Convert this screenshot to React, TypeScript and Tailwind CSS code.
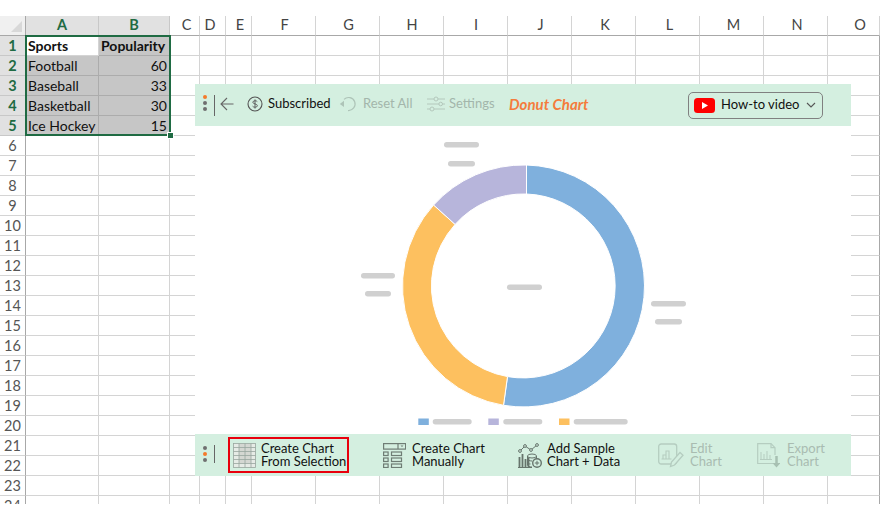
import React from "react";

const cols = [["A",""],["B",""],["C","pl-[4px]"],["D","pr-[5px]"],["E","pl-[3px]"],["F","pl-[2px]"],["G","pl-[2px]"],["H","pl-[1px]"],["I","pl-[1px]"],["J","pl-[2px]"],["K","pl-[3px]"],["L","pl-[4px]"],["M","pl-[4px]"],["N","pl-[3px]"],["O","pl-[13px]"]] as const;
const data: Record<number,[string,string]> = {1:["Sports","Popularity"],2:["Football","60"],3:["Baseball","33"],4:["Basketball","30"],5:["Ice Hockey","15"]};
const rows = Array.from({length:24},(_,i)=>i+1);

function Sheet(){
  return (
    <div className="grid h-[488px] overflow-hidden font-['Lato',sans-serif] text-[14px] text-[#111] grid-cols-[26px_73px_71px_30px_26px_26px_64px_64px_64px_64px_64px_64px_64px_64px_64px_52px] auto-rows-[20px]">
      <div className="bg-[#f0f0f0] border-b border-r border-[#a8a8a8] flex items-end justify-end"><div className="w-0 h-0 border-b-[11px] border-l-[11px] border-b-[#d8d8d8] border-l-transparent mr-[3px] mb-[3px]"/></div>
      {cols.map(([c,off],i)=>(
        <div key={c} className={`flex items-center justify-center pb-px border-b border-[#a8a8a8] text-[14.5px] ${off} ${i<2?"bg-[#e1e1e1] border-r border-r-[#c8c8c8] text-[#1f6b43] font-bold":"border-r border-r-[#d4d4d4] text-[#444]"}`}>{c}</div>
      ))}
      {rows.map(r=>(
        <React.Fragment key={r}>
          <div className={`flex items-center justify-center border-r border-[#a8a8a8] border-b text-[14.5px] ${r<=5?"bg-[#e1e1e1] border-b-[#c8c8c8] text-[#1f6b43] font-bold":"bg-white border-b-[#d4d4d4] text-[#555]"}`}>{r}</div>
          {cols.map(([c],i)=>{
            const sel = r<=5 && i<2 && !(r===1&&i===0);
            const v = i<2 && data[r] ? data[r][i] : "";
            return (
              <div key={c} className={`flex items-center border-b pl-[2px] pr-[2px] whitespace-nowrap ${i===14?"border-r border-r-[#a8a8a8]":"border-r"} ${sel?"bg-[#c6c6c6] border-[#acacac]":"border-[#d4d4d4]"} ${r===1?"font-bold":""} ${i===1&&r>1?"justify-end":""}`}>{v}</div>
            );
          })}
        </React.Fragment>
      ))}
    </div>
  );
}

const Dots=({mid}:{mid?:boolean})=>(
  <div className={`flex flex-col gap-[2px] w-[4px] ${mid?"mb-[3px]":"mb-[4px]"}`}>
    <span className={`w-[4px] h-[4px] rounded-full ${mid?"bg-[#6f6f6f]":"bg-[#f47a2a]"}`}/>
    <span className={`w-[4px] h-[4px] rounded-full ${mid?"bg-[#f47a2a]":"bg-[#6f6f6f]"}`}/>
    <span className="w-[4px] h-[4px] rounded-full bg-[#6f6f6f]"/>
  </div>
);

function TopBar(){
  return (
    <div className="flex items-center h-[42px] bg-[#d4efe0] pl-[8px] font-['Lato',sans-serif] text-[13px]">
      <Dots/>
      <span className="ml-[7px] w-px h-[21px] bg-[#666]"/>
      <svg className="ml-[5px] mb-[2px]" width="14" height="14" viewBox="0 0 14 14" fill="none" stroke="#666" strokeWidth="1.1"><path d="M13.500 7H1M7 1 1 7l6 6"/></svg>
      <svg className="ml-[13px] mb-[2px]" width="16" height="16" viewBox="0 0 16 16" fill="none" stroke="#555" strokeWidth="1.1"><circle cx="8" cy="8" r="7"/><path d="M10.300 5.600C9.800 4.600 6 4.200 5.800 6.200 5.700 8.300 10.500 7.500 10.400 9.800 10.200 11.800 6.200 11.400 5.600 10.200M8 3.400v9.200" strokeWidth=".9"/></svg>
      <span className="ml-[5px] mb-[2px] w-[62px] text-[#111] whitespace-nowrap">Subscribed</span>
      <svg className="ml-[9px] mb-[2px]" width="18" height="16" viewBox="0 0 18 16" fill="none" stroke="#aec4b8" strokeWidth="1.2"><path d="M5 3.400A6.500 6.500 0 1 1 9 14.500"/><path d="M0.800 8 5 4.800V11Z" fill="#aec4b8" stroke="none"/></svg>
      <span className="ml-[6px] mb-[2px] w-[48px] text-[#a3b6ab] whitespace-nowrap">Reset All</span>
      <svg className="ml-[16px] mb-[2px]" width="18" height="16" viewBox="0 0 18 16" fill="none" stroke="#b4c8bc" strokeWidth="1"><path d="M0 3h7M11 3h7M0 8h12M15.500 8H18M0 13h3M7 13h11"/><circle cx="9" cy="3" r="2"/><circle cx="13.700" cy="8" r="1.800"/><circle cx="5" cy="13" r="2"/></svg>
      <span className="ml-[4px] mb-[2px] w-[45px] text-[#a3b6ab] whitespace-nowrap">Settings</span>
      <span className="ml-[15px] mb-[2px] w-[81px] text-[15px] font-bold italic text-[#f47c3c] whitespace-nowrap">Donut Chart</span>
      <div className="ml-[98px] w-[135px] h-[27px] border border-[#808080] rounded-[5px] flex items-center pl-[5px]">
        <svg width="21" height="15" viewBox="0 0 21 15"><rect width="21" height="15" rx="3.500" fill="#fe0000"/><path d="M8 4l6 3.500L8 11z" fill="#fff"/></svg>
        <span className="ml-[6px] w-[76px] text-[#111] whitespace-nowrap">How-to video</span>
        <svg className="ml-[9px]" width="10" height="6" viewBox="0 0 10 6" fill="none" stroke="#555" strokeWidth="1.1"><path d="M1 1l4 4 4-4"/></svg>
      </div>
    </div>
  );
}

const TableIcon=()=>(
  <svg className="shrink-0" width="23" height="25" viewBox="0 0 23 25" fill="none" stroke="#98a69e" strokeWidth=".8">
    <rect x=".5" y=".5" width="22" height="24" fill="#e6ebe6"/>
    <rect x="6" y="1" width="12" height="19" fill="#d4d7d2" stroke="none"/>
    <path d="M.5 4.500h22M.5 8.500h22M.5 12.500h22M.5 16.500h22M.5 20.500h22M6 .5v24M12 .5v24M18 .5v24"/>
  </svg>
);
const ManualIcon=()=>(
  <svg className="shrink-0" width="23" height="25" viewBox="0 0 23 25" fill="none" stroke="#6f7d75" strokeWidth="1.2">
    <rect x=".6" y=".6" width="22" height="5.500"/><path d="M15 .6v5.500"/><path d="M17.500 2.500h3l-1.500 1.500z" fill="#6f7d75" stroke="none"/>
    <rect x=".6" y="9" width="4.500" height="3.500"/><rect x="8.500" y="9" width="10" height="3.500"/>
    <rect x=".6" y="15" width="4.500" height="3.500"/><rect x="8.500" y="15" width="10" height="3.500"/>
    <rect x=".6" y="21" width="4.500" height="3.500"/><rect x="8.500" y="21" width="10" height="3.500"/>
  </svg>
);
const SampleIcon=()=>(
  <svg className="shrink-0" width="24" height="25" viewBox="0 0 24 25" fill="none" stroke="#66746c" strokeWidth="1">
    <path d="M2 8 7 3l6 4 6-5"/><circle cx="2" cy="8" r="1.400" fill="#d4efe0"/><circle cx="7" cy="3" r="1.400" fill="#d4efe0"/><circle cx="13" cy="7" r="1.400" fill="#d4efe0"/><circle cx="19" cy="2" r="1.400" fill="#d4efe0"/>
    <path d="M1.500 24V14M4.500 24V11M7.500 24V16M10.500 24V13" strokeWidth="1.800"/>
    <path d="M0 24.500h14"/>
    <ellipse cx="14" cy="13" rx="4.500" ry="2" fill="#d4efe0"/>
    <path d="M9.500 13v9c0 1 2 2 4.500 2M18.500 13v3M9.500 16c0 1 2 2 4.500 2M9.500 19.500c0 1 1.500 1.500 3 1.500"/>
    <circle cx="19" cy="20" r="4.300" fill="#d4efe0" strokeWidth="1.400"/><path d="M16.800 20h4.400M19 17.800v4.400"/>
  </svg>
);
const EditIcon=()=>(
  <svg className="shrink-0" width="26" height="25" viewBox="0 0 26 25" fill="none" stroke="#b5cdc0" strokeWidth="1.300">
    <rect x=".7" y="1" width="18" height="20" rx="2.500"/>
    <path d="M5 16v-4h3v4M8 16V8h3v8M3.500 16h10" strokeWidth="1.100"/>
    <path d="M12.500 23.500 13.500 19 22 9.500l3 2.700-8.500 9.800z" fill="#d4efe0"/>
  </svg>
);
const ExportIcon=()=>(
  <svg className="shrink-0" width="23" height="25" viewBox="0 0 23 25" fill="none" stroke="#b5cdc0" strokeWidth="1.200">
    <path d="M16 20.500H.7V.7H14l4 4V12"/><path d="M14 .7v4h4"/>
    <path d="M4 16V9M7 16v-5M10 16V8M13 16v-4M3 16.500h12" strokeWidth="1"/>
    <path d="M19.500 13v8" strokeWidth="2.500" stroke="#a7c0b2"/><path d="M15.500 20h8l-4 4.500z" fill="#a7c0b2" stroke="none"/>
  </svg>
);

function Tool({icon,a,b,dim,w,gap=6}:{icon:React.ReactNode;a:string;b:string;dim?:boolean;w:number;gap?:number}){
  return (
    <div className="flex items-center shrink-0" style={{width:w,columnGap:gap}}>
      {icon}
      <div className={`leading-[13px] whitespace-nowrap ${dim?"text-[#a9bcb1]":"text-[#111]"}`}>
        <div>{a}</div><div>{b}</div>
      </div>
    </div>
  );
}

function BottomBar(){
  return (
    <div className="flex items-center h-[42px] bg-[#d4efe0] pl-[8px] font-['Lato',sans-serif] text-[13px]">
      <Dots mid/>
      <span className="ml-[7px] mb-[3px] w-px h-[18px] bg-[#666]"/>
      <div className="ml-[13px] w-[121px] h-[36px] border-2 border-[#e8000d] flex items-center pl-[3px]">
        <Tool icon={<TableIcon/>} a="Create Chart" b="From Selection" w={114} gap={5}/>
      </div>
      <div className="ml-[34px]"><Tool icon={<ManualIcon/>} a="Create Chart" b="Manually" w={135}/></div>
      <Tool icon={<SampleIcon/>} a="Add Sample" b="Chart + Data" w={140} gap={5}/>
      <Tool icon={<EditIcon/>} a="Edit" b="Chart" w={99} dim/>
      <Tool icon={<ExportIcon/>} a="Export" b="Chart" w={66} dim gap={7}/>
    </div>
  );
}

function Donut(){
  const bar=(x:number,y:number,w:number)=><rect x={x} y={y} width={w} height="5.500" rx="2.700" fill="#d0d0d0"/>;
  return (
    <svg className="block" width="656" height="308" viewBox="195 126 656 308">
      <g stroke="#fff" strokeWidth="1">
        <path d="M526.500 165A121 121 0 1 1 503.500 405.300L507.500 376.600A92 92 0 1 0 526.500 194Z" fill="#7fb0dd"/>
        <path d="M503.500 405.300A121 121 0 0 1 433.600 205L455.100 224.400A92 92 0 0 0 507.500 376.600Z" fill="#fdc05f"/>
        <path d="M433.600 205A121 121 0 0 1 526.500 165V194A92 92 0 0 0 455.100 224.400Z" fill="#b7b5db"/>
      </g>
      {bar(444,142,35)}{bar(448,161,27)}
      {bar(361,273,34)}{bar(365,291,26)}
      {bar(507,284.500,35)}
      {bar(651,301,35)}{bar(655,319,27)}
      <rect x="418.300" y="418.500" width="10.500" height="6.500" fill="#7fb0dd"/>{bar(432.700,419,39)}
      <rect x="488.300" y="418.500" width="10.500" height="6.500" fill="#b7b5db"/>{bar(503.300,419,39)}
      <rect x="559" y="418.500" width="10.500" height="6.500" fill="#fdc05f"/>{bar(573.700,419,54)}
    </svg>
  );
}

export default function App(){
  return (
    <div className="relative w-[883px] h-[520px] bg-white overflow-hidden pt-4">
      <Sheet/>
      <div className="absolute left-[25px] top-[35px] w-[146px] h-[101px] border-2 border-[#1f6b43]"/>
      <div className="absolute left-[168px] top-[133px] w-[5px] h-[5px] bg-[#1f6b43] outline outline-1 outline-white"/>
      <div className="absolute left-[195px] top-[84px] w-[656px] h-[392px] bg-white flex flex-col">
        <TopBar/>
        <Donut/>
        <BottomBar/>
      </div>
    </div>
  );
}
